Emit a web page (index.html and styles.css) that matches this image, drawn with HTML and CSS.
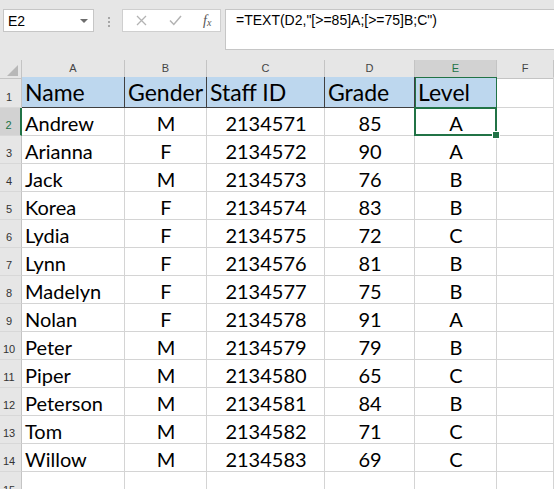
FILE: index.html
```html
<!DOCTYPE html>
<html lang="en">
<head>
    <meta charset="UTF-8">
    <meta name="viewport" content="width=device-width, initial-scale=1.0">
    <title>Level with TEXT</title>
    <link rel="stylesheet" href="styles.css">
</head>
<body>

    <div class="toolbar">
        <div class="namebox">
            <span>E2</span>
            <span class="caret"></span>
        </div>
        <div class="grip"><i></i><i></i><i></i></div>
        <div class="fxbox">
            <svg class="ico" width="11" height="11" viewBox="0 0 11 11">
                <path d="M1 1 L10 10 M10 1 L1 10" stroke="#b3b3b3" stroke-width="1.3" fill="none"/>
            </svg>
            <svg class="ico" width="13" height="11" viewBox="0 0 13 11">
                <path d="M1 5.5 L4.8 9.5 L12 1" stroke="#b3b3b3" stroke-width="1.5" fill="none"/>
            </svg>
            <span class="fx">f<sub>x</sub></span>
        </div>
        <div class="formula">=TEXT(D2,"[&gt;=85]A;[&gt;=75]B;C")</div>
    </div>

    <div class="sheet">

        <div class="row colheads">
            <div class="corner"><span class="tri"></span></div>
            <div class="ch">A</div>
            <div class="ch">B</div>
            <div class="ch">C</div>
            <div class="ch">D</div>
            <div class="ch active">E</div>
            <div class="ch">F</div>
        </div>

        <div class="row titles">
            <div class="rh">1</div>
            <div class="c hd">Name</div>
            <div class="c hd">Gender</div>
            <div class="c hd">Staff ID</div>
            <div class="c hd">Grade</div>
            <div class="c hd lastcol">Level</div>
            <div class="c"></div>
        </div>

        <div class="row">
            <div class="rh active">2</div>
            <div class="c">Andrew</div>
            <div class="c mid">M</div>
            <div class="c mid">2134571</div>
            <div class="c mid">85</div>
            <div class="c mid sel">A</div>
            <div class="c"></div>
        </div>
        <div class="row">
            <div class="rh">3</div>
            <div class="c">Arianna</div>
            <div class="c mid">F</div>
            <div class="c mid">2134572</div>
            <div class="c mid">90</div>
            <div class="c mid">A</div>
            <div class="c"></div>
        </div>
        <div class="row">
            <div class="rh">4</div>
            <div class="c">Jack</div>
            <div class="c mid">M</div>
            <div class="c mid">2134573</div>
            <div class="c mid">76</div>
            <div class="c mid">B</div>
            <div class="c"></div>
        </div>
        <div class="row">
            <div class="rh">5</div>
            <div class="c">Korea</div>
            <div class="c mid">F</div>
            <div class="c mid">2134574</div>
            <div class="c mid">83</div>
            <div class="c mid">B</div>
            <div class="c"></div>
        </div>
        <div class="row">
            <div class="rh">6</div>
            <div class="c">Lydia</div>
            <div class="c mid">F</div>
            <div class="c mid">2134575</div>
            <div class="c mid">72</div>
            <div class="c mid">C</div>
            <div class="c"></div>
        </div>
        <div class="row">
            <div class="rh">7</div>
            <div class="c">Lynn</div>
            <div class="c mid">F</div>
            <div class="c mid">2134576</div>
            <div class="c mid">81</div>
            <div class="c mid">B</div>
            <div class="c"></div>
        </div>
        <div class="row">
            <div class="rh">8</div>
            <div class="c">Madelyn</div>
            <div class="c mid">F</div>
            <div class="c mid">2134577</div>
            <div class="c mid">75</div>
            <div class="c mid">B</div>
            <div class="c"></div>
        </div>
        <div class="row">
            <div class="rh">9</div>
            <div class="c">Nolan</div>
            <div class="c mid">F</div>
            <div class="c mid">2134578</div>
            <div class="c mid">91</div>
            <div class="c mid">A</div>
            <div class="c"></div>
        </div>
        <div class="row">
            <div class="rh">10</div>
            <div class="c">Peter</div>
            <div class="c mid">M</div>
            <div class="c mid">2134579</div>
            <div class="c mid">79</div>
            <div class="c mid">B</div>
            <div class="c"></div>
        </div>
        <div class="row">
            <div class="rh">11</div>
            <div class="c">Piper</div>
            <div class="c mid">M</div>
            <div class="c mid">2134580</div>
            <div class="c mid">65</div>
            <div class="c mid">C</div>
            <div class="c"></div>
        </div>
        <div class="row">
            <div class="rh">12</div>
            <div class="c">Peterson</div>
            <div class="c mid">M</div>
            <div class="c mid">2134581</div>
            <div class="c mid">84</div>
            <div class="c mid">B</div>
            <div class="c"></div>
        </div>
        <div class="row">
            <div class="rh">13</div>
            <div class="c">Tom</div>
            <div class="c mid">M</div>
            <div class="c mid">2134582</div>
            <div class="c mid">71</div>
            <div class="c mid">C</div>
            <div class="c"></div>
        </div>
        <div class="row">
            <div class="rh">14</div>
            <div class="c">Willow</div>
            <div class="c mid">M</div>
            <div class="c mid">2134583</div>
            <div class="c mid">69</div>
            <div class="c mid">C</div>
            <div class="c"></div>
        </div>
        <div class="row last">
            <div class="rh">15</div>
            <div class="c"></div>
            <div class="c"></div>
            <div class="c"></div>
            <div class="c"></div>
            <div class="c"></div>
            <div class="c"></div>
        </div>

    </div>

</body>
</html>
```

FILE: styles.css
```css
*{
    margin: 0;
    padding: 0;
    box-sizing: border-box;
}

body{
    width: 554px;
    height: 489px;
    overflow: hidden;
    background: #fff;
    font-family: "Liberation Sans", Arial, sans-serif;
}

/* formula bar */

.toolbar{
    height: 60px;
    background: #e6e6e6;
    display: flex;
    align-items: flex-start;
    padding: 9px 0 0 3px;
}

.namebox{
    width: 91px;
    height: 23px;
    background: #fff;
    border: 1px solid #c6c6c6;
    display: flex;
    align-items: center;
    justify-content: space-between;
    padding: 0 5px 0 4px;
    font-size: 14px;
    color: #000;
}

.caret{
    width: 0;
    height: 0;
    border-left: 4px solid transparent;
    border-right: 4px solid transparent;
    border-top: 4px solid #6d6d6d;
}

.grip{
    display: flex;
    flex-direction: column;
    gap: 2px;
    margin: 8px 0 0 14px;
}

.grip i{
    display: block;
    width: 2px;
    height: 2px;
    background: #a6a6a6;
}

.fxbox{
    width: 99px;
    height: 23px;
    margin-left: 12px;
    background: #fff;
    border: 1px solid #cfcfcf;
    display: flex;
    align-items: center;
    padding-left: 13px;
}

.ico{
    display: block;
}

.ico + .ico{
    margin-left: 22px;
}

.fx{
    margin-left: 21px;
    font-family: "Liberation Serif", serif;
    font-style: italic;
    font-size: 14px;
    color: #555;
    line-height: 1;
}

.fx sub{
    font-size: 10px;
    vertical-align: -1px;
}

.formula{
    flex: 1;
    height: 41px;
    margin-left: 4px;
    background: #fff;
    border: 1px solid #c6c6c6;
    border-right: none;
    padding: 2px 0 0 10px;
    font-size: 14px;
    line-height: 17px;
    color: #000;
}

/* grid */

.row{
    display: grid;
    grid-template-columns: 22px 103px 82px 118px 90px 82px 57px;
    height: 28px;
}

.colheads{
    height: 17px;
}

.titles{
    height: 31px;
}

.row.last .rh{
    align-items: flex-start;
    padding-top: 12px;
}

.corner{
    background: #e6e6e6;
    border-right: 1px solid #c4c4c4;
    border-bottom: 1px solid #c4c4c4;
    position: relative;
}

.tri{
    position: absolute;
    right: 3px;
    bottom: 2px;
    width: 0;
    height: 0;
    border-left: 11px solid transparent;
    border-bottom: 11px solid #b8b8b8;
}

.ch{
    background: #e6e6e6;
    border-right: 1px solid #c4c4c4;
    border-bottom: 1px solid #c4c4c4;
    text-align: center;
    font-size: 11px;
    line-height: 17px;
    color: #444;
}

.ch.active{
    background: #d2d2d2;
    color: #217346;
    border-bottom: 2px solid #217346;
}

.rh{
    background: #e6e6e6;
    border-right: 1px solid #c4c4c4;
    border-bottom: 1px solid #d8d8d8;
    display: flex;
    align-items: flex-end;
    justify-content: center;
    padding: 0 3px 4px 0;
    font-size: 11px;
    line-height: 12px;
    color: #333;
}

.rh.active{
    background: #d2d2d2;
    color: #217346;
    border-right: 2px solid #217346;
}

.c{
    border-right: 1px solid #d4d4d4;
    border-bottom: 1px solid #d4d4d4;
    display: flex;
    align-items: flex-end;
    padding: 0 2px 0 3px;
    font-family: Lato, "Liberation Sans", sans-serif;
    font-size: 20px;
    line-height: 24px;
    color: #000;
    white-space: nowrap;
}

.mid{
    justify-content: center;
}

.hd{
    background: #bdd7ee;
    border-right: 1px solid #3f3f3f;
    border-bottom: 1px solid #3f3f3f;
    padding-bottom: 1px;
    font-size: 23px;
    line-height: 28px;
}

.hd.lastcol{
    border-right: 1px solid #217346;
    border-bottom: 1px solid #217346;
    box-shadow: inset 1px 1px 0 #217346;
}

.sel{
    position: relative;
}

.sel::after{
    content: "";
    position: absolute;
    left: -1px;
    top: -1px;
    right: -1px;
    bottom: -1px;
    border: 2px solid #217346;
}

.sel::before{
    content: "";
    position: absolute;
    right: -4px;
    bottom: -4px;
    width: 6px;
    height: 6px;
    background: #217346;
    border: 1px solid #fff;
    z-index: 1;
}
```
